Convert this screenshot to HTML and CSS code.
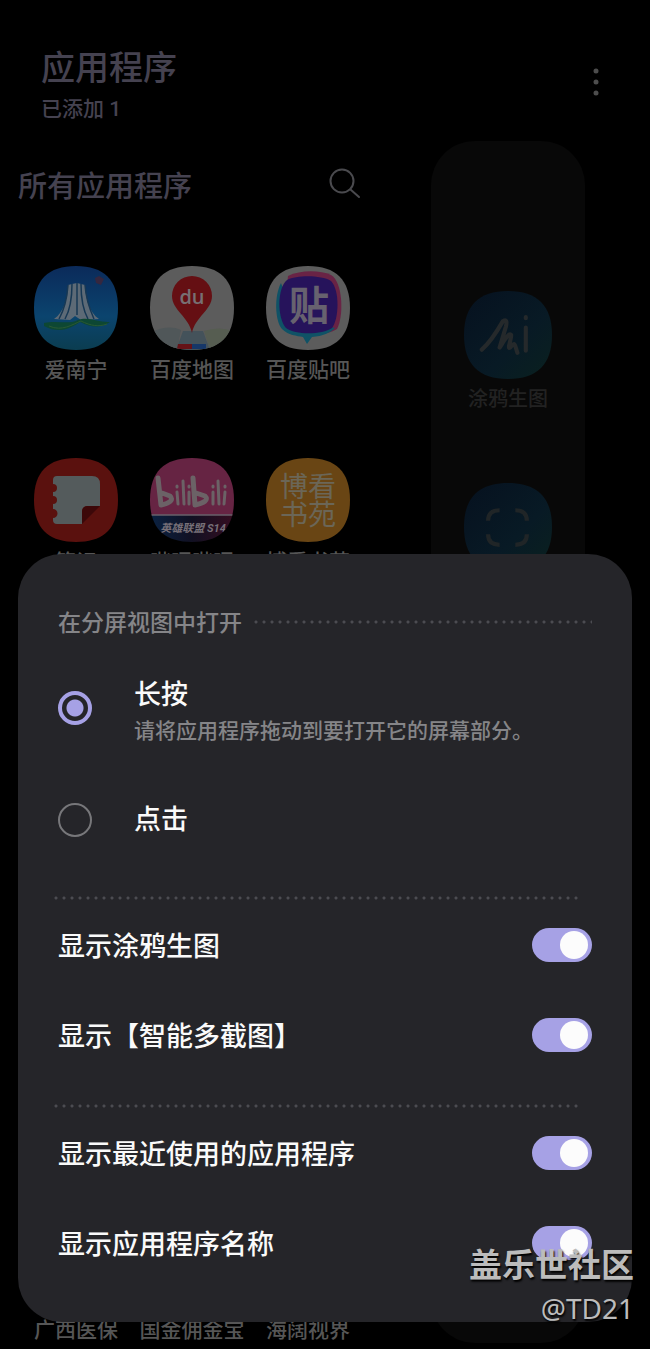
FILE: index.html
```html
<!DOCTYPE html>
<html lang="zh-CN">
<head>
  <meta charset="UTF-8" />
  <meta name="viewport" content="width=device-width, initial-scale=1.0" />
  <title>应用程序</title>
  <link rel="stylesheet" href="styles.css">
</head>
<body>
  <svg width="0" height="0" class="defs" aria-hidden="true">
    <defs>
      <clipPath id="squircle">
        <path d="M42 0C70 0 84 14 84 42S70 84 42 84S0 70 0 42S14 0 42 0Z"/>
      </clipPath>
      <linearGradient id="sky" x1="0" y1="0" x2="0" y2="1">
        <stop offset="0" stop-color="#0b2a5a"/>
        <stop offset="0.6" stop-color="#0b446e"/>
        <stop offset="1" stop-color="#0b3d50"/>
      </linearGradient>
      <linearGradient id="night" x1="0" y1="0" x2="1" y2="0">
        <stop offset="0" stop-color="#0a2242"/>
        <stop offset="0.5" stop-color="#111022"/>
        <stop offset="1" stop-color="#350d20"/>
      </linearGradient>
      <linearGradient id="teal" x1="0" y1="0" x2="1" y2="1">
        <stop offset="0" stop-color="#06111f"/>
        <stop offset="0.6" stop-color="#081a25"/>
        <stop offset="1" stop-color="#0a211f"/>
      </linearGradient>
    </defs>
  </svg>

  <header class="topbar">
    <div>
      <h1>应用程序</h1>
      <p>已添加 1</p>
    </div>
    <button class="icon-btn" aria-label="更多选项">
      <svg width="8" height="36" viewBox="0 0 8 36" fill="#4d4d4d">
        <circle cx="4" cy="3" r="2.500"/><circle cx="4" cy="14" r="2.500"/><circle cx="4" cy="25" r="2.500"/>
      </svg>
    </button>
  </header>

  <main class="content">
    <section>
      <div class="list-head">
        <h2>所有应用程序</h2>
        <button class="icon-btn" aria-label="搜索">
          <svg width="32" height="32" viewBox="0 0 32 32" fill="none" stroke="#4a4a4e" stroke-width="2" stroke-linecap="round">
            <circle cx="13" cy="13" r="11.500"/><path d="M21.500 21.500L30 29"/>
          </svg>
        </button>
      </div>

      <div class="apps">
        <button class="app">
          <svg class="app-icon" viewBox="0 0 84 84">
            <g clip-path="url(#squircle)">
              <rect width="84" height="84" fill="url(#sky)"/>
              <path d="M61 12l4-2 5 3-3 6-5-2z" fill="#35273f"/>
              <path d="M34 19C33 34 30 46 20 53L36 54L41 50L47 54L65 53C55 46 52 34 51 19L47 18L43 17L38 18Z" fill="#5d6a76"/>
              <path d="M34 19C33 34 30 44 25 53M38 18C38 34 36 44 31 53M47 18C47 34 49 44 54 53M51 19C52 34 56 44 60 53M43 17V49" fill="none" stroke="#173854" stroke-width="1.500"/>
              <path d="M10 57C24 54 34 59 44 54C55 50 65 57 76 56C64 64 55 60 46 56C36 63 24 68 10 60Z" fill="#0d4733"/>
              <path d="M15 60C28 66 39 58 47 55C57 60 65 61 73 58" fill="none" stroke="#2a5933" stroke-width="1"/>
            </g>
          </svg>
          <span>爱南宁</span>
        </button>
        <button class="app">
          <svg class="app-icon" viewBox="0 0 84 84">
            <g clip-path="url(#squircle)">
              <rect width="84" height="84" fill="#5c5c5c"/>
              <path d="M0 67Q18 58 31 64L27 84H0Z" fill="#505759"/>
              <path d="M54 65Q68 60 84 65V84H60Z" fill="#565d51"/>
              <path d="M33 65H53L60 84H26Z" fill="#44525a"/>
              <path d="M42 67C39 51 22 44 22 30A20 20 0 0 1 62 30C62 44 45 51 42 67Z" fill="#650f13"/>
              <path d="M28 78H42V83H27Z" fill="#651217"/><path d="M42 78H56V83H42Z" fill="#163768"/>
              <text x="42" y="38" text-anchor="middle" class="mark-du">du</text>
            </g>
          </svg>
          <span>百度地图</span>
        </button>
        <button class="app">
          <svg class="app-icon" viewBox="0 0 84 84">
            <g clip-path="url(#squircle)">
              <rect width="84" height="84" fill="#5c5c5c"/>
              <path d="M22 10C34 4 54 4 65 9C77 16 78 50 71 63C60 71 26 70 17 63Z" fill="#692345"/>
              <path d="M15 17C8 30 9 55 16 63C22 69 31 70 37 71L41 78L46 71C57 70 64 67 69 62L29 54Z" fill="#0f5266"/>
              <path d="M21 14C31 9 55 9 65 15C74 24 73 53 66 62C56 69 29 69 20 62C11 52 11 22 21 14Z" fill="#26135b"/>
              <text x="43" y="54" text-anchor="middle" class="mark-tie">贴</text>
            </g>
          </svg>
          <span>百度贴吧</span>
        </button>

        <button class="app">
          <svg class="app-icon" viewBox="0 0 84 84">
            <g clip-path="url(#squircle)">
              <rect width="84" height="84" fill="#5a110e"/>
              <path d="M23 18H58Q66 18 66 26V48H54Q48 48 48 54V66H23Q19 66 19 62V60A4 4 0 0 0 19 51V46A4 4 0 0 0 19 38V34A4 4 0 0 0 19 26V22Q19 18 23 18Z" fill="#545b5c"/>
              <path d="M48 66L66 48H54Q48 48 48 54Z" fill="#3c0809"/>
            </g>
          </svg>
          <span>笔记</span>
        </button>
        <button class="app">
          <svg class="app-icon" viewBox="0 0 84 84">
            <g clip-path="url(#squircle)">
              <rect width="84" height="58" fill="#662443"/>
              <rect y="57" width="84" height="27" fill="url(#night)"/>
              <path d="M0 57H84" stroke="#68606a" stroke-width="1.500"/>
              <!-- bilibili wordmark -->
              <g fill="none" stroke="#6b6266" stroke-width="5" stroke-linecap="round" stroke-linejoin="round">
                <path d="M8 20L11 47C20 45 24 42 20 38L12 35"/>
                <path d="M43 20L45 47C54 45 59 42 55 38L46 35"/>
                <path stroke-width="3" d="M27 34L28 46M33 23L34 46M39 34V46M63 34V46M68 23L69 46M75 34L74 46M27 28V29M39 28V29M63 28V29M75 28V29"/>
              </g>
              <text x="43" y="74" text-anchor="middle" class="mark-lol">英雄联盟 S14</text>
            </g>
          </svg>
          <span>哔哩哔哩</span>
        </button>
        <button class="app">
          <span class="app-icon book-icon">博看<br>书苑</span>
          <span>博看书苑</span>
        </button>

        <button class="app app-last"><span>广西医保</span></button>
        <button class="app app-last"><span>国金佣金宝</span></button>
        <button class="app app-last"><span>海阔视界</span></button>
      </div>
    </section>

    <aside class="edge-panel">
      <button class="app">
        <svg class="app-icon" viewBox="0 0 84 84">
          <g clip-path="url(#squircle)">
            <rect width="84" height="84" fill="url(#teal)"/>
            <path d="M17 56C25 49 33 36 37 29Q42 26 40 34L34 54C38 48 43 39 45 42C45 47 41 56 44 54C49 48 48 50 51 59M59 35V57M59 25V26" fill="none" stroke="#25292b" stroke-width="4" stroke-linecap="round" stroke-linejoin="round"/>
          </g>
        </svg>
        <span>涂鸦生图</span>
      </button>
      <button class="app" aria-label="智能多截图">
        <svg class="app-icon" viewBox="0 0 84 84">
          <g clip-path="url(#squircle)">
            <rect width="84" height="84" fill="url(#teal)"/>
            <path d="M23 36Q23 26 34 26M49 26Q60 26 60 36M60 49Q60 59 49 59M34 59Q23 59 23 49" fill="none" stroke="#202527" stroke-width="4"/>
          </g>
        </svg>
      </button>
    </aside>
  </main>

  <form class="sheet">
    <h3><span>在分屏视图中打开</span></h3>
    <label class="option">
      <input type="radio" name="open" checked />
      <span>长按<small>请将应用程序拖动到要打开它的屏幕部分。</small></span>
    </label>
    <label class="option">
      <input type="radio" name="open" />
      <span>点击</span>
    </label>

    <hr />
    <label class="toggle"><span>显示涂鸦生图</span><input type="checkbox" role="switch" checked /></label>
    <label class="toggle"><span>显示【智能多截图】</span><input type="checkbox" role="switch" checked /></label>
    <hr />
    <label class="toggle"><span>显示最近使用的应用程序</span><input type="checkbox" role="switch" checked /></label>
    <label class="toggle"><span>显示应用程序名称</span><input type="checkbox" role="switch" checked /></label>
  </form>

  <div class="watermark">
    <strong>盖乐世社区</strong>
    <span>@TD21</span>
  </div>
</body>
</html>
```
FILE: styles.css
```css
* {
  box-sizing: border-box;
}
body {
  position: relative;
  min-height: 100vh;
  margin: 0;
  background: #000;
  color: #565656;
  font-family: Roboto, "Noto Sans CJK SC", sans-serif;
  font-weight: 500;
}
h1, h2, h3, p {
  margin: 0;
  font-weight: 500;
}
button {
  padding: 0;
  border: none;
  background: none;
  color: inherit;
  font: inherit;
  cursor: pointer;
}
.defs {
  position: absolute;
}

/* dimmed app list */
.topbar {
  display: flex;
  justify-content: space-between;
  align-items: center;
  padding: 45px 50px 14px 41px;
  color: #454250;
}
.topbar h1 {
  font-size: 34px;
  line-height: 46px;
}
.topbar p {
  font-size: 21px;
  line-height: 36px;
}
.icon-btn svg {
  display: block;
}
.content {
  display: grid;
  grid-template-columns: 1fr 154px;
  column-gap: 65px;
  padding: 0 65px 0 18px;
}
.list-head {
  display: flex;
  justify-content: space-between;
  align-items: center;
  height: 86px;
  padding-right: 5px;
  color: #454250;
}
.list-head h2 {
  font-size: 29px;
}
.apps {
  display: grid;
  grid-template-columns: repeat(3, 1fr);
  grid-template-rows: repeat(6, 119px);
  row-gap: 73px;
  padding-top: 39px;
}
.app {
  display: flex;
  flex-direction: column;
  align-items: center;
  gap: 5px;
  font-size: 21px;
  line-height: 30px;
  white-space: nowrap;
}
.app-icon {
  width: 84px;
  height: 84px;
}
.app-last {
  grid-row: 6;
  justify-content: flex-end;
}
.mark-du {
  fill: #777073;
  font: 600 20px "Open Sans", sans-serif;
}
.mark-tie {
  fill: #67626f;
  font: 700 40px "Noto Sans CJK SC", sans-serif;
}
.mark-lol {
  fill: #777078;
  font: italic 700 11px Roboto, "Noto Sans CJK SC", sans-serif;
}
.book-icon {
  padding-top: 13px;
  clip-path: url(#squircle);
  background: #694514;
  color: #6b6657;
  font: 400 28px/28px "Noto Sans CJK SC", sans-serif;
}
.edge-panel {
  display: flex;
  flex-direction: column;
  align-items: center;
  gap: 69px;
  margin-bottom: 2px;
  padding-top: 150px;
  border-radius: 44px;
  background: #080808;
  color: #222;
}
.edge-panel .app {
  font-size: 20px;
}
.edge-panel .app-icon {
  width: 88px;
  height: 88px;
}

/* settings sheet */
.sheet {
  position: absolute;
  right: 18px;
  bottom: 27px;
  left: 18px;
  padding: 52px 40px 34px;
  border-radius: 44px;
  background: #252529;
  color: #fafafa;
  font-size: 27px;
  line-height: 36px;
}
.sheet h3 {
  display: flex;
  align-items: center;
  gap: 10px;
  height: 32px;
  margin-bottom: 39px;
  color: #858588;
  font-size: 23px;
}
.sheet h3 span, .toggle span {
  padding-top: 4px;
}
.sheet h3::after {
  content: "";
  flex: 1;
}
.sheet h3::after, .sheet hr {
  height: 4px;
  background: radial-gradient(circle, #4c4c51 1px, transparent 2px) 0 0 / 8px 4px;
}
.sheet hr {
  margin: 24px 10px 0 -6px;
  border: none;
}
.option {
  display: flex;
  align-items: center;
  gap: 42px;
}
.option + .option {
  margin: 53px 0 58px;
}
.option small {
  display: block;
  color: #858588;
  font-size: 21px;
}
.option input {
  appearance: none;
  flex: none;
  width: 34px;
  height: 34px;
  margin: 0;
  border: 2px solid #77777a;
  border-radius: 50%;
}
.option input:checked {
  align-self: flex-start;
  margin-top: 14px;
  border: 4px solid #a6a1e5;
  background: radial-gradient(circle, #a6a1e5 8px, transparent 9px);
}
.toggle {
  display: flex;
  justify-content: space-between;
  align-items: center;
  height: 90px;
}
.option + hr {
  margin-top: 0;
}
.toggle input {
  appearance: none;
  width: 60px;
  height: 34px;
  margin: 0;
  border-radius: 17px;
  background: #68686d;
}
.toggle input::before {
  content: "";
  display: block;
  width: 28px;
  height: 28px;
  margin: 3px;
  border-radius: 50%;
  background: #fcfcfc;
}
.toggle input:checked {
  background: #a6a1e5;
}
.toggle input:checked::before {
  margin-left: 28px;
}

.watermark {
  position: absolute;
  right: 16px;
  bottom: 21px;
  display: flex;
  flex-direction: column;
  align-items: flex-end;
  color: #bcbcbc;
  text-shadow: 1px 2px 2px #000;
  pointer-events: none;
}
.watermark strong {
  font-size: 33px;
  line-height: 44px;
}
.watermark span {
  font: 28px/40px "Noto Sans", sans-serif;
}
```
